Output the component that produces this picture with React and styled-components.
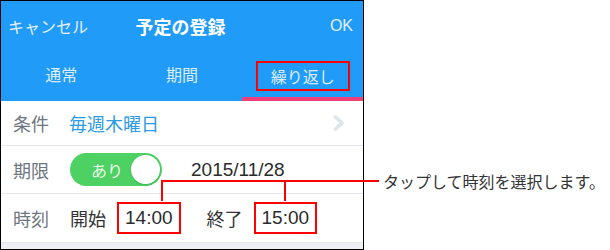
import React from 'react';
import styled, { createGlobalStyle } from 'styled-components';

const GlobalStyle = createGlobalStyle`
    html, body {
        margin: 0;
        padding: 0;
        background: #fff;
    }
    body {
        font-family: "Liberation Sans", "Noto Sans CJK JP", sans-serif;
    }
`;

const BLUE = '#219bf8';
const RED = '#ff0000';

const App = () => {
    return (
        <>
            <GlobalStyle />
            <Page>
                <Phone>
                    <NavBar>
                        <NavButton>キャンセル</NavButton>
                        <NavTitle>予定の登録</NavTitle>
                        <NavButton $right>OK</NavButton>
                    </NavBar>
                    <TabBar>
                        <Tab>通常</Tab>
                        <Tab>期間</Tab>
                        <Tab $active>
                            <Marked $tab>繰り返し</Marked>
                        </Tab>
                    </TabBar>
                    <Row $height={44}>
                        <Label>条件</Label>
                        <LinkValue>毎週木曜日</LinkValue>
                        <Chevron width="12" height="16" viewBox="0 0 12 16">
                            <polyline points="2.5,2 9,8 2.5,14" />
                        </Chevron>
                    </Row>
                    <Row $height={47}>
                        <Label>期限</Label>
                        <Switch>
                            <SwitchText>あり</SwitchText>
                            <Knob />
                        </Switch>
                        <DateText>2015/11/28</DateText>
                    </Row>
                    <Row $height={48}>
                        <Label>時刻</Label>
                        <Word>開始</Word>
                        <Marked $gap={11}>14:00</Marked>
                        <Word $gap={26}>終了</Word>
                        <Marked $gap={11}>15:00</Marked>
                    </Row>
                    <Footer />
                </Phone>

                {/* callout lines over the screenshot */}
                <Leader style={{ left: 161, top: 180, width: 218, height: 2 }} />
                <Leader style={{ left: 161, top: 180, width: 2, height: 21 }} />
                <Leader style={{ left: 284, top: 180, width: 2, height: 21 }} />
                <Note>タップして時刻を選択します。</Note>
            </Page>
        </>
    );
};

export default App;

const Page = styled.div`
    position: relative;
    width: 610px;
    height: 250px;
    overflow: hidden;
    background: #fff;
`;

const Phone = styled.div`
    width: 364px;
    height: 250px;
    box-sizing: border-box;
    border: 1px solid #000;
    display: flex;
    flex-direction: column;
    background: #fff;
`;

const NavBar = styled.div`
    height: 49px;
    flex-shrink: 0;
    display: grid;
    grid-template-columns: 1fr auto 1fr;
    align-items: center;
    padding: 0 10px 0 7px;
    background: ${BLUE};
`;

const NavButton = styled.div`
    font-size: 16px;
    color: #e4f1ff;
    justify-self: ${(p) => (p.$right ? 'end' : 'start')};
`;

const NavTitle = styled.div`
    font-size: 18px;
    font-weight: 700;
    color: #fff;
`;

const TabBar = styled.div`
    height: 51px;
    flex-shrink: 0;
    display: grid;
    grid-template-columns: repeat(3, 1fr);
    background: ${BLUE};
`;

const Tab = styled.div`
    display: flex;
    align-items: center;
    justify-content: center;
    box-sizing: border-box;
    padding-top: ${(p) => (p.$active ? '4px' : '0')};
    border-bottom: 4px solid ${(p) => (p.$active ? '#ef3f7b' : 'transparent')};
    font-size: 16px;
    color: #dcedff;
`;

const Marked = styled.span`
    display: inline-flex;
    align-items: center;
    justify-content: center;
    box-sizing: border-box;
    border: 2px solid ${RED};
    height: ${(p) => (p.$tab ? '30px' : '32px')};
    padding: ${(p) => (p.$tab ? '0 13px' : '0 6px')};
    margin-left: ${(p) => (p.$gap ? `${p.$gap}px` : '0')};
    font-size: ${(p) => (p.$tab ? '16px' : '19px')};
    color: ${(p) => (p.$tab ? '#dcedff' : '#2b2b2b')};
`;

const Row = styled.div`
    height: ${(p) => p.$height}px;
    flex-shrink: 0;
    display: flex;
    align-items: center;
    padding: 0 18px 0 12px;
    border-bottom: 1px solid #e4e8ee;
`;

const Label = styled.div`
    width: 56px;
    flex-shrink: 0;
    font-size: 18px;
    color: #6e7680;
`;

const LinkValue = styled.div`
    flex: 1;
    font-size: 18px;
    color: #2b9be6;
`;

const Chevron = styled.svg`
    fill: none;
    stroke: #dde4ec;
    stroke-width: 3.5;
    stroke-linecap: round;
    stroke-linejoin: round;
`;

const Switch = styled.div`
    width: 92px;
    height: 33px;
    margin-left: 1px;
    box-sizing: border-box;
    border-radius: 17px;
    background: #4dd163;
    display: flex;
    align-items: center;
    justify-content: space-between;
    padding: 0 2px 0 21px;
`;

const SwitchText = styled.span`
    font-size: 16px;
    color: #eafbe9;
`;

const Knob = styled.span`
    width: 29px;
    height: 29px;
    border-radius: 50%;
    background: #fff;
    box-shadow: 0 1px 2px rgba(0, 0, 0, 0.15);
`;

const DateText = styled.div`
    margin-left: 29px;
    font-size: 19px;
    color: #2b2b2b;
`;

const Word = styled.span`
    margin-left: ${(p) => (p.$gap ? `${p.$gap}px` : '1px')};
    font-size: 18px;
    color: #333;
`;

const Footer = styled.div`
    flex: 1;
    background: #eef0f4;
`;

const Leader = styled.div`
    position: absolute;
    background: ${RED};
`;

const Note = styled.div`
    position: absolute;
    left: 383px;
    top: 171px;
    font-family: "Noto Sans CJK JP", sans-serif;
    font-size: 16px;
    line-height: 20px;
    color: #333;
    white-space: nowrap;
`;
